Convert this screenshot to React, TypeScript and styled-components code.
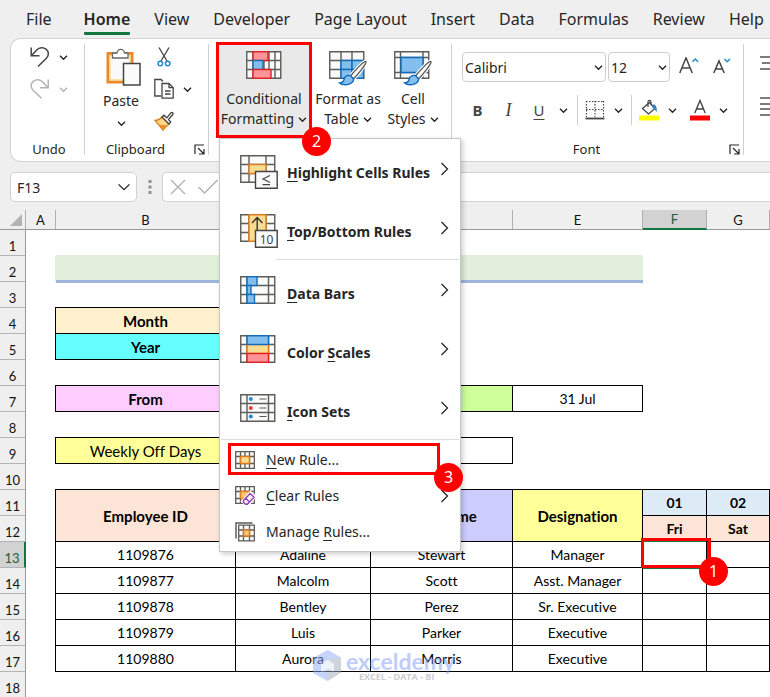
import React from 'react';
import styled, { createGlobalStyle, css } from 'styled-components';

const UI = '"Noto Sans", "Open Sans", sans-serif';
const SHEET = 'Lato, "Open Sans", sans-serif';
const INK = '#262626';
const RED = '#ff0000';
const GREEN = '#137641';

const GlobalStyle = createGlobalStyle`
  * { box-sizing: border-box; }
  body { margin: 0; background: #efefef; color: ${INK}; font-family: ${UI}; }
  button, input, select { font: inherit; color: inherit; }
`;

const Page = styled.div`
  display: flex;
  flex-direction: column;
  height: 100vh;
  overflow: hidden;
`;

/* ---------- tabs ---------- */
const Tabs = styled.nav`
  display: flex;
  gap: 24px;
  height: 38px;
  padding-left: 26px;
  flex: none;
`;
const Tab = styled.button<{ $active?: boolean }>`
  position: relative;
  height: 38px;
  padding: 0;
  border: 0;
  background: none;
  font-size: 16px;
  line-height: 38px;
  white-space: nowrap;
  font-weight: ${(p) => (p.$active ? 600 : 400)};
  margin-left: ${(p) => (p.$active ? '8px' : '0')};
  ${(p) =>
    p.$active &&
    css`
      &::after {
        content: '';
        position: absolute;
        left: 0;
        right: 0;
        bottom: 3px;
        height: 3px;
        border-radius: 1px;
        background: ${GREEN};
      }
    `}
`;

/* ---------- ribbon ---------- */
const Ribbon = styled.div`
  display: flex;
  flex: none;
  margin-left: 10px;
  background: #fff;
  border: 1px solid #d1d1d1;
  border-right: 0;
  border-radius: 10px 0 0 10px;
`;
const Divider = styled.div`
  width: 1px;
  flex: none;
  margin: 5px 0 6px;
  background: #d1d1d1;
`;
const Group = styled.section<{ $width: number }>`
  width: ${(p) => p.$width}px;
  flex: none;
  padding-top: 3px;
`;
const GroupBody = styled.div<{ $pad?: string }>`
  display: flex;
  height: 96px;
  padding: ${(p) => p.$pad || '0'};
`;
const GroupFooter = styled.div`
  display: flex;
  align-items: center;
  height: 23px;
  font-size: 13px;
  line-height: 23px;
`;
const GroupLabel = styled.span<{ $wide?: boolean }>`
  flex: 1;
  text-align: center;
  padding-left: ${(p) => (p.$wide ? '3px' : '0')};
`;
const Launcher = styled.button`
  width: 22px;
  height: 22px;
  padding: 0 0 0 8px;
  border: 0;
  background: none;
  display: flex;
  align-items: center;
`;
const Stack = styled.div<{ $gap: number; $pad?: string }>`
  display: flex;
  flex-direction: column;
  gap: ${(p) => p.$gap}px;
  padding: ${(p) => p.$pad || '0'};
`;
const IconButton = styled.button<{ $gap?: number; $muted?: boolean; $width?: number }>`
  display: flex;
  align-items: center;
  gap: ${(p) => p.$gap || 0}px;
  width: ${(p) => (p.$width ? `${p.$width}px` : 'auto')};
  height: 24px;
  padding: 0;
  border: 0;
  background: none;
  flex: none;
  color: ${(p) => (p.$muted ? '#b4b4b4' : INK)};
`;
const IconSlot = styled.span`
  display: flex;
  padding-left: 7px;
`;
const BigButton = styled.button<{ $width: number; $hot?: boolean }>`
  display: flex;
  flex-direction: column;
  align-items: center;
  width: ${(p) => p.$width}px;
  height: 96px;
  flex: none;
  padding: 9px 0 0;
  border: 0;
  background: ${(p) => (p.$hot ? '#e9e9e9' : 'none')};
  font-size: 14px;
  line-height: 20px;
  white-space: nowrap;
`;
const PasteButton = styled(BigButton)`
  padding-top: 6px;
`;
const BigIcon = styled.span<{ $shift?: boolean; $tall?: boolean }>`
  display: flex;
  height: ${(p) => (p.$tall ? 43 : 38)}px;
  padding-left: ${(p) => (p.$shift ? 5 : 0)}px;
`;
const WithChevron = styled.span`
  display: flex;
  align-items: center;
  gap: 4px;
`;
const MenuAnchor = styled.div`
  position: relative;
  flex: none;
`;

/* ---------- callouts ---------- */
const Frame = styled.span`
  position: absolute;
  inset: 0;
  border: 3px solid ${RED};
  pointer-events: none;
`;
const Badge = styled.span<{ $right: number; $bottom: number }>`
  position: absolute;
  right: ${(p) => p.$right}px;
  bottom: ${(p) => p.$bottom}px;
  z-index: 5;
  width: 29px;
  height: 29px;
  border-radius: 50%;
  background: ${RED};
  color: #fff;
  font: 400 16px/29px ${UI};
  text-align: center;
`;

/* ---------- font group ---------- */
const FontTools = styled.div`
  display: flex;
  flex-direction: column;
  gap: 13px;
  padding: 10px 0 0 10px;
`;
const ToolRow = styled.div`
  display: flex;
  align-items: center;
  height: 30px;
`;
const SelectBox = styled.label<{ $width: number }>`
  display: flex;
  align-items: center;
  position: relative;
  width: ${(p) => p.$width}px;
  height: 30px;
  margin-right: 2px;
  border: 1px solid #cdcdcd;
  border-radius: 4px;
  font-size: 14px;
  select {
    appearance: none;
    width: 100%;
    height: 28px;
    padding: 0 18px 0 2px;
    border: 0;
    background: none;
  }
  svg {
    position: absolute;
    right: 2px;
    pointer-events: none;
  }
`;
const ToolDivider = styled.span`
  width: 1px;
  height: 30px;
  background: #d1d1d1;
`;
const Letter = styled.span<{ $kind: 'b' | 'i' | 'u' }>`
  width: ${(p) => (p.$kind === 'u' ? 30 : 31)}px;
  text-align: center;
  font-size: 15px;
  line-height: 20px;
  color: #444;
  ${(p) => p.$kind === 'b' && 'font-weight: 700;'}
  ${(p) => p.$kind === 'i' && 'font-style: italic; font-family: "Liberation Serif", serif; font-size: 18px;'}
  ${(p) => p.$kind === 'u' && 'text-decoration: underline; text-underline-offset: 3px;'}
`;

/* ---------- menu ---------- */
const Menu = styled.div`
  position: absolute;
  top: 100%;
  left: 3px;
  z-index: 4;
  width: 242px;
  padding: 2px 1px 1px;
  background: #fff;
  border: 1px solid #c6c6c6;
  box-shadow: 2px 2px 5px rgba(0, 0, 0, 0.2);
`;
const MenuItem = styled.button<{ $small?: boolean }>`
  position: relative;
  display: flex;
  align-items: center;
  width: 100%;
  height: ${(p) => (p.$small ? 36 : 59)}px;
  padding: 0 10px 0 ${(p) => (p.$small ? 14 : 19)}px;
  border: 0;
  background: none;
  text-align: left;
  font-size: 14px;
  line-height: 20px;
  font-weight: ${(p) => (p.$small ? 400 : 700)};
  white-space: nowrap;
`;
const MenuIcon = styled.span<{ $small?: boolean }>`
  display: flex;
  width: ${(p) => (p.$small ? 31 : 47)}px;
  flex: none;
  ${(p) => !p.$small && 'align-self: flex-start; padding-top: 14px;'}
`;
const MenuText = styled.span<{ $small?: boolean }>`
  flex: 1;
  padding-top: ${(p) => (p.$small ? 0 : 5)}px;
  u { text-underline-offset: 3px; text-decoration-thickness: 1px; }
`;
const ArrowSlot = styled.span<{ $small?: boolean }>`
  display: flex;
  padding-bottom: ${(p) => (p.$small ? 0 : 4)}px;
`;
const MenuLine = styled.div<{ $inset?: boolean }>`
  height: 1px;
  margin: ${(p) => (p.$inset ? '0 0 2px 55px' : '0 0 2px')};
  background: #dcdcdc;
`;
const ItemFrame = styled.span`
  position: absolute;
  inset: 1px 19px 3px 7px;
  border: 3px solid ${RED};
`;

/* ---------- formula bar ---------- */
const FormulaBar = styled.div`
  display: flex;
  align-items: center;
  flex: none;
  padding: 10px 0 8px 10px;
`;
const NameBox = styled.div`
  display: flex;
  align-items: center;
  width: 127px;
  height: 30px;
  background: #fff;
  border: 1px solid #d1d1d1;
  border-radius: 5px;
  input {
    flex: 1;
    min-width: 0;
    padding: 0 0 0 6px;
    border: 0;
    background: none;
    font-size: 14px;
    outline: 0;
  }
  button {
    display: flex;
    padding: 0 5px 0 0;
    border: 0;
    background: none;
  }
`;
const Dots = styled.span`
  display: flex;
  justify-content: center;
  width: 25px;
`;
const FormulaBox = styled.div`
  display: flex;
  align-items: center;
  gap: 12px;
  flex: 1;
  height: 30px;
  padding-left: 7px;
  background: #fff;
  border: 1px solid #d1d1d1;
  border-right: 0;
  border-radius: 5px 0 0 5px;
`;
const BareButton = styled.button`
  display: flex;
  padding: 0;
  border: 0;
  background: none;
`;

/* ---------- sheet ---------- */
const SheetArea = styled.main`
  position: relative;
  flex: 1;
  min-height: 0;
  overflow: hidden;
  background: #fff;
`;
const Grid = styled.table`
  width: 100%;
  table-layout: fixed;
  border-collapse: separate;
  border-spacing: 0;
  font-family: ${SHEET};
  font-size: 14px;
  line-height: 20px;
  font-variant-ligatures: none;
  color: #000;
  th, td { padding: 0; overflow: visible; white-space: nowrap; }
`;
const Col = styled.col<{ $w?: number }>`
  width: ${(p) => (p.$w ? `${p.$w}px` : 'auto')};
`;
const ColHead = styled.th<{ $active?: boolean }>`
  height: 20px;
  font-size: 13px;
  line-height: 18px;
  font-weight: 400;
  background: ${(p) => (p.$active ? '#d2d2d2' : '#efefef')};
  color: ${(p) => (p.$active ? '#1d5c3d' : '#111')};
  border-right: 1px solid #b0b0b0;
  border-bottom: ${(p) => (p.$active ? `2px solid ${GREEN}` : '1px solid #999')};
`;
const Corner = styled(ColHead)`
  svg { display: block; margin-left: 10px; }
`;
const RowHead = styled.th<{ $active?: boolean }>`
  height: 26px;
  font-size: 13px;
  line-height: 18px;
  font-weight: 400;
  vertical-align: bottom;
  background: ${(p) => (p.$active ? '#d2d2d2' : '#efefef')};
  color: ${(p) => (p.$active ? '#1d5c3d' : '#111')};
  border-right: ${(p) => (p.$active ? `2px solid ${GREEN}` : '1px solid #999')};
  border-bottom: 1px solid #b4b4b4;
`;
const Cell = styled.td<{ $fill?: string; $boxed?: boolean; $bold?: boolean; $large?: boolean }>`
  position: relative;
  text-align: center;
  vertical-align: middle;
  background: ${(p) => p.$fill || 'transparent'};
  font-size: ${(p) => (p.$large ? 15 : 14)}px;
  font-weight: ${(p) => (p.$bold ? 700 : 400)};
  border-right: 1px solid transparent;
  border-bottom: 1px solid transparent;
  ${(p) =>
    p.$boxed &&
    css`
      border-color: #000;
      box-shadow: -1px 0 0 #000, 0 -1px 0 #000, -1px -1px 0 #000;
    `}
`;
const TitleCell = styled.td`
  background: #e2efda;
  border-bottom: 2px solid #9fb5de;
  box-shadow: -1px 0 0 #e2efda, 0 -1px 0 #e2efda, 0 1px 0 #9fb5de;
`;
const Selected = styled.span`
  position: absolute;
  inset: -2px -2px -2px -1px;
  border: 2px solid ${GREEN};
`;
const CellFrame = styled.span`
  position: absolute;
  inset: -4px -5px -1px -2px;
  z-index: 1;
  border: 3px solid ${RED};
`;
const Watermark = styled.div`
  position: absolute;
  left: 313px;
  top: 440px;
  display: flex;
  align-items: center;
  gap: 4px;
  color: #7f9cf5;
  opacity: 0.5;
  div { font: 700 23px/22px Lato, sans-serif; }
  small {
    display: block;
    padding-left: 13px;
    font: 700 9px/9px "Open Sans", sans-serif;
    color: #9a9aa4;
  }
`;

/* ---------- drawings ---------- */
const Chevron = ({ w = 9, color = INK }: { w?: number; color?: string }) => (
  <svg width={w} height={w} viewBox="0 0 9 9" fill="none" stroke={color} strokeWidth={w > 10 ? 0.85 : 1.4}>
    <path d="M1 2.8 4.5 6.2 8 2.8" />
  </svg>
);
const Arrow = () => (
  <svg width="9" height="14" viewBox="0 0 9 14" fill="none" stroke={INK} strokeWidth="1.3">
    <path d="M1.5 1 7.5 7l-6 6" />
  </svg>
);
const UndoIcon = () => (
  <svg width="20" height="22" viewBox="0 0 20 22" fill="none" stroke="#444" strokeWidth="1.5">
    <path d="M1.2 1.5v8.3h8.3M1.6 9.4 7 3.8C9.3 1.5 13.3 1 16 3.2c3 2.5 3.2 6 .4 9L8 20.5" />
  </svg>
);
const RedoIcon = () => (
  <svg width="20" height="22" viewBox="0 0 20 22" fill="none" stroke="currentColor" strokeWidth="1.5">
    <path d="M18.3 1.5v8.3H10M17.9 9.4 12.5 3.8C10.2 1.5 6.200 1 3.5 3.2c-3 2.5-3.200 6-.4 9l8.600 8.3" />
  </svg>
);
const PasteIcon = () => (
  <svg width="36" height="38" viewBox="0 0 36 38" fill="none">
    <path d="M2 5.500h24V34H2z" fill="#fafafa" stroke="#e8892b" strokeWidth="3" />
    <path d="M4 7.500h20V32H4z" stroke="#fbd98b" strokeWidth="1.500" />
    <path d="M6.500 10V5H11a3.700 3.700 0 0 1 7.400 0H22v5z" fill="#fff" stroke="#6a6a6a" strokeWidth="1.300" />
    <path d="M17.500 15.500h16.500v21.500H17.500z" fill="#fafafa" stroke="#444" strokeWidth="1.500" />
  </svg>
);
const CutIcon = () => (
  <svg width="20" height="22" viewBox="0 0 20 22" fill="none">
    <path d="M5 1.500 13 15M15 1.500 7 15" stroke="#444" strokeWidth="1.300" />
    <circle cx="6.300" cy="17.500" r="2.300" stroke="#2389cf" strokeWidth="1.500" />
    <circle cx="13.700" cy="17.500" r="2.300" stroke="#2389cf" strokeWidth="1.500" />
  </svg>
);
const CopyIcon = () => (
  <svg width="20" height="22" viewBox="0 0 20 22" fill="none" stroke="#444" strokeWidth="1.300">
    <path d="M7 18H.8V1.500H7l2 2" />
    <path d="M8 5.500h7l4.200 4.200v10.500H8z" fill="#fff" />
    <path d="M15 5.500v4.200h4.200M11 13h5.500M11 16h5.500" />
  </svg>
);
const BrushIcon = () => (
  <svg width="20" height="20" viewBox="0 0 20 20" fill="none">
    <path d="M1 9.500c3-.3 5.500-1.500 7-3.500l7 7c-2 2-4 3.500-6 6z" fill="#fbd98b" stroke="#e07b1a" strokeWidth="1.300" />
    <path d="M4 13.500 9 18l4-3.500z" fill="#f08a24" />
    <path d="m8 6 2-1.800 2.800 2.600L17 1.800c1.200-1 2.700.5 1.800 1.700L14.500 8.500l2.200 2.500-1.700 2z" fill="#fff" stroke="#444" strokeWidth="1.300" />
  </svg>
);
const LauncherIcon = () => (
  <svg width="11" height="11" viewBox="0 0 11 11" fill="none" stroke={INK} strokeWidth="1.200">
    <path d="M1 10V1h9M4 4l5.500 5.500M10 5v5H5" />
  </svg>
);

type Box = [number, number, number, number, string, string];
const BLUE: [string, string] = ['#83beec', '#0f6cbd'];
const ROSE: [string, string] = ['#ff9499', '#e02020'];
const AMBER: [string, string] = ['#f8dc92', '#e07b1a'];

const GridIcon = ({
  v,
  boxes = [],
  width = 38,
  height = 34,
  h = 28,
  children,
}: {
  v: number[];
  boxes?: Box[];
  width?: number;
  height?: number;
  h?: number;
  children?: React.ReactNode;
}) => (
  <svg width={width} height={height} viewBox={`0 0 ${width} ${height}`} fill="none">
    <path
      d={`M.75.75h34v${h - 1.5}h-34zM.75 9.500h34M.75 18.500h34${v.map((x) => `M${x} .75v${h - 1.5}`).join('')}`}
      fill="#fafafa"
      stroke="#5c5c58"
      strokeWidth="1.400"
    />
    {boxes.map(([x, y, w, bh, fill, stroke], i) => (
      <rect key={i} x={x} y={y} width={w} height={bh} fill={fill} stroke={stroke} strokeWidth="1.400" />
    ))}
    {children}
  </svg>
);
const BrushOverlay = () => (
  <g>
    <path d="M36 10.500c-3 1.500-11 10-14.500 14.500l3 2.800C28.500 24 36 14.500 37 11.500c.200-.9-.3-1.300-1-1z" fill="#fff" stroke="#fff" strokeWidth="3.500" />
    <path d="M36 10.500c-3 1.500-11 10-14.500 14.500l3 2.800C28.500 24 36 14.500 37 11.500c.200-.9-.3-1.300-1-1z" fill="#fff" stroke="#555" strokeWidth="1.300" />
    <path d="M21.500 24.500c-4-.5-6 1.500-6.500 4-.4 2-2 3.300-4.500 3.500 3 2.500 13 3 14.300-3.800z" fill="#83beec" stroke="#0f6cbd" strokeWidth="1.300" />
  </g>
);
const ConditionalIcon = () => (
  <GridIcon
    width={36}
    height={28}
    v={[7, 18, 23, 29]}
    boxes={[
      [7, 0.75, 15, 8.75, ...ROSE],
      [7, 9.5, 10, 9, ...BLUE],
      [7, 18.5, 18, 8.75, ...ROSE],
    ]}
  />
);
const TableIcon = () => (
  <GridIcon
    v={[12, 23]}
    height={36}
    boxes={[
      [12, 9.5, 11, 9, ...BLUE],
      [23, 9.5, 11.5, 9, ...BLUE],
      [12, 18.5, 11, 8.75, ...BLUE],
      [23, 18.5, 11.5, 8.75, ...BLUE],
    ]}
  >
    <BrushOverlay />
  </GridIcon>
);
const StylesIcon = () => (
  <svg width="38" height="36" viewBox="0 0 38 36" fill="none">
    <path d="M.75.75h34v26.500h-34zM.75 6.500h34M.75 21.500h34M6.500.75v26.500M29 .75v26.500" fill="#fafafa" stroke="#5c5c58" strokeWidth="1.400" />
    <path d="M7 6.500h22v15H7z" fill="#83beec" stroke="#0f6cbd" strokeWidth="1.400" />
    <BrushOverlay />
  </svg>
);
const HighlightIcon = () => (
  <GridIcon v={[9, 26]} boxes={[[9, 9.5, 17, 9, ...AMBER]]}>
    <path d="M15.500 16.500h21.700v16.700H15.500z" fill="#fafafa" stroke="#444" strokeWidth="1.400" />
    <path d="m30 20.500-7 3.500 7 3.500M22.500 29.700H30" stroke="#444" strokeWidth="1.200" />
  </GridIcon>
);
const TopBottomIcon = () => (
  <GridIcon v={[9, 26]} boxes={[[9, 0.75, 17, 26.5, ...AMBER]]}>
    <path d="M17.200 19V4M12 9l5.200-5.500L22.500 9" stroke="#333" strokeWidth="1.400" />
    <path d="M15.500 16.500h21.700v16.700H15.500z" fill="#fafafa" stroke="#444" strokeWidth="1.400" />
    <text x="26.500" y="29.500" textAnchor="middle" fontSize="12" fontWeight="400" fontFamily="Noto Sans, sans-serif" fill="#444">10</text>
  </GridIcon>
);
const DataBarsIcon = () => (
  <GridIcon
    height={28}
    v={[7, 28.5]}
    boxes={[
      [7, 0.75, 10, 8.75, ...BLUE],
      [7, 9.5, 4, 9, ...BLUE],
      [7, 18.5, 7.5, 8.75, ...BLUE],
    ]}
  />
);
const ScalesIcon = () => (
  <GridIcon
    height={28}
    v={[7, 28.5]}
    boxes={[
      [7, 9.5, 21.5, 9, ...AMBER],
      [7, 0.75, 21.5, 8.75, ...BLUE],
      [7, 18.5, 21.5, 8.75, ...ROSE],
    ]}
  />
);
const SetsIcon = () => (
  <GridIcon height={28} v={[7, 28.5]}>
    <path d="M19.500 5h7M19.500 14h7M19.500 22.500h7" stroke="#5c5c58" strokeWidth="1.200" />
    <circle cx="10.800" cy="5" r="2" fill="#2389cf" />
    <circle cx="10.800" cy="14" r="2" fill="#ee3a35" />
    <circle cx="10.800" cy="22.500" r="2" fill="#2389cf" />
  </GridIcon>
);
const SmallGrid = () => (
  <path d="M.7.7h18.600v16.600H.7zM.7 5.500h18.600M.7 12.500h18.600M5.500.7v16.600M14.500.7v16.600M10 .7v16.600" fill="#fafafa" stroke="#5c5c58" strokeWidth="1.300" />
);
const NewRuleIcon = () => (
  <svg width="20" height="18" viewBox="0 0 20 18" fill="none">
    <SmallGrid />
    <path d="M5.500 5.500h9v7h-9z" fill="#f8dc92" stroke="#e07b1a" strokeWidth="1.600" />
  </svg>
);
const ClearIcon = () => (
  <svg width="20" height="20" viewBox="0 0 20 20" fill="none">
    <SmallGrid />
    <path d="M5.500 5.500h9v7h-9z" fill="#f8c878" stroke="#e07b1a" strokeWidth="1.400" />
    <path d="M7 15.500 15.500 6l5 4.500-7.500 9z" fill="#fff" stroke="#fff" strokeWidth="2" />
    <path d="m8.500 14.500 6.700-7 3.800 3.700-6.700 7.100h-1.600l-2.200-2.100zM10.800 12.200l3.600 3.700" fill="#fff" stroke="#9b3fb5" strokeWidth="1.500" />
  </svg>
);
const ManageIcon = () => (
  <svg width="20" height="20" viewBox="0 0 20 20" fill="none">
    <path d="M1 16.500V1h16.500" stroke="#5c5c58" strokeWidth="1.500" />
    <path d="M3.700 3.200h15.600v15.600H3.700zM3.700 8h15.600M3.700 14h15.600M8.500 3.200v15.600M14.500 3.200v15.600" fill="#fafafa" stroke="#5c5c58" strokeWidth="1.300" />
    <path d="M8.500 8h6v6h-6z" fill="#f8c878" stroke="#e07b1a" strokeWidth="1.600" />
  </svg>
);
const GrowIcon = ({ down }: { down?: boolean }) => (
  <svg width="20" height="20" viewBox="0 0 20 20" fill="none">
    <path
      d={down ? 'M.8 16 6 4l5.200 12M2.700 12h6.600' : 'M.8 16 7 .8 13.200 16M3 11h8'}
      stroke="#444"
      strokeWidth="1.500"
    />
    <path d={down ? 'M11.500 2l2.700 2.700L17 2' : 'M13.500 4.700 16.200 2 19 4.700'} stroke="#2389cf" strokeWidth="1.500" />
  </svg>
);
const BordersIcon = () => (
  <svg width="20" height="20" viewBox="0 0 20 20" fill="none" stroke="#444">
    <path d="M1.500 1v16M10 1v16M18.500 1v16M1 1.500h18M1 9.500h18" strokeWidth="1.200" strokeDasharray="1.500 1.500" />
    <path d="M.5 18.500h19" strokeWidth="1.800" />
  </svg>
);
const FillIcon = () => (
  <svg width="20" height="22" viewBox="0 0 20 22" fill="none">
    <path d="m10.500 3.500 5.500 6-6.500 5.500-6-5.500z" fill="#fff" stroke="#444" strokeWidth="1.300" />
    <path d="M9 8V3c0-2.300 3-2.300 3 0v3" stroke="#444" strokeWidth="1.200" />
    <path d="M14 5.500c3 0 4 2.500 3.800 7.500-1.300-1.500-2-3-4.300-4" fill="#2d7fc4" />
    <path d="M0 16.500h20v5H0z" fill="#ff0" />
  </svg>
);
const FontColorIcon = () => (
  <svg width="20" height="22" viewBox="0 0 20 22" fill="none">
    <path d="M4.800 14 10 1.500 15.200 14M6.500 10h7" stroke="#444" strokeWidth="1.400" />
    <path d="M0 16.500h20v5H0z" fill={RED} />
  </svg>
);
const AlignIcon = ({ rows }: { rows: [number, number][] }) => (
  <svg width="18" height="20" viewBox="0 0 18 20" stroke="#444" strokeWidth="1.400">
    {rows.map(([x, y]) => (
      <path key={y} d={`M${x} ${y}H${18 - x}`} />
    ))}
  </svg>
);

/* ---------- data ---------- */
const tabs = ['File', 'Home', 'View', 'Developer', 'Page Layout', 'Insert', 'Data', 'Formulas', 'Review', 'Help'];

type Entry = { pre?: string; k: string; post: string; icon: React.ReactNode; sub?: boolean; marked?: boolean };
const rules: Entry[] = [
  { k: 'H', post: 'ighlight Cells Rules', icon: <HighlightIcon /> },
  { k: 'T', post: 'op/Bottom Rules', icon: <TopBottomIcon /> },
  { k: 'D', post: 'ata Bars', icon: <DataBarsIcon /> },
  { pre: 'Color ', k: 'S', post: 'cales', icon: <ScalesIcon /> },
  { k: 'I', post: 'con Sets', icon: <SetsIcon /> },
];
const actions: Entry[] = [
  { k: 'N', post: 'ew Rule...', icon: <NewRuleIcon />, marked: true },
  { k: 'C', post: 'lear Rules', icon: <ClearIcon />, sub: true },
  { pre: 'Manage ', k: 'R', post: 'ules...', icon: <ManageIcon /> },
];

type CellData = {
  t?: string;
  fill?: string;
  box?: boolean;
  bold?: boolean;
  large?: boolean;
  span?: number;
  rows?: number;
  selected?: boolean;
};
const E: CellData = {};
const B: CellData = { box: true };
const label = (t: string, fill: string, more: CellData = {}): CellData => ({
  t,
  fill,
  box: true,
  bold: true,
  large: true,
  ...more,
});
const day = (t: string, fill: string): CellData => ({ t, fill, box: true, bold: true });
const person = (id: string, first: string, last: string, role: string, selected = false): CellData[] => [
  E,
  { t: id, box: true },
  { t: first, box: true },
  { t: last, box: true },
  { t: role, box: true },
  { box: true, selected },
  B,
];
const blank: CellData[] = [E, E, E, E, E, E, E];
const sheet: (CellData[] | 'title')[] = [
  blank,
  'title',
  blank,
  [E, label('Month', '#fff0cd'), B, E, E, E, E],
  [E, label('Year', '#66ffff'), B, E, E, E, E],
  blank,
  [E, label('From', '#ffccff'), B, { fill: '#ccff99', box: true }, { t: '31 Jul', box: true }, E, E],
  blank,
  [E, label('Weekly Off Days', '#ffff99', { bold: false }), { box: true, span: 2 }, E, E, E],
  blank,
  [
    E,
    label('Employee ID', '#fce4d6', { rows: 2 }),
    { box: true, rows: 2 },
    label('Last Name', '#ccccff', { rows: 2 }),
    label('Designation', '#ffff99', { rows: 2 }),
    day('01', '#ddebf7'),
    day('02', '#ddebf7'),
  ],
  [E, day('Fri', '#fce4d6'), day('Sat', '#fce4d6')],
  person('1109876', 'Adaline', 'Stewart', 'Manager', true),
  person('1109877', 'Malcolm', 'Scott', 'Asst. Manager'),
  person('1109878', 'Bentley', 'Perez', 'Sr. Executive'),
  person('1109879', 'Luis', 'Parker', 'Executive'),
  person('1109880', 'Aurora', 'Morris', 'Executive'),
  blank,
];

const RuleMenu = () => (
  <Menu role="menu">
    {rules.map((r, i) => (
      <React.Fragment key={r.post}>
        {i === 2 && <MenuLine $inset />}
        <MenuItem role="menuitem">
          <MenuIcon>{r.icon}</MenuIcon>
          <MenuText>
            {r.pre}
            <u>{r.k}</u>
            {r.post}
          </MenuText>
          <ArrowSlot><Arrow /></ArrowSlot>
        </MenuItem>
      </React.Fragment>
    ))}
    <MenuLine />
    {actions.map((a) => (
      <MenuItem role="menuitem" $small key={a.post}>
        <MenuIcon $small>{a.icon}</MenuIcon>
        <MenuText $small>
          {a.pre}
          <u>{a.k}</u>
          {a.post}
        </MenuText>
        {a.sub && <ArrowSlot $small><Arrow /></ArrowSlot>}
        {a.marked && (
          <ItemFrame>
            <Badge $right={-26} $bottom={-20}>3</Badge>
          </ItemFrame>
        )}
      </MenuItem>
    ))}
  </Menu>
);

export default function App() {
  return (
    <Page>
      <GlobalStyle />
      <Tabs>
        {tabs.map((t) => (
          <Tab key={t} $active={t === 'Home'}>{t}</Tab>
        ))}
      </Tabs>

      <Ribbon>
        <Group $width={73}>
          <GroupBody>
            <Stack $gap={8} $pad="3px 0 0 19px">
              <IconButton aria-label="Undo" $gap={9}><UndoIcon /><Chevron /></IconButton>
              <IconButton aria-label="Redo" $gap={9} $muted><RedoIcon /><Chevron color="#b4b4b4" /></IconButton>
            </Stack>
          </GroupBody>
          <GroupFooter><GroupLabel $wide>Undo</GroupLabel></GroupFooter>
        </Group>
        <Divider />
        <Group $width={123}>
          <GroupBody $pad="0 0 0 12px">
            <PasteButton $width={48}>
              <BigIcon $shift $tall><PasteIcon /></BigIcon>
              <span>Paste</span>
              <IconButton as="span"><Chevron /></IconButton>
            </PasteButton>
            <Stack $gap={8} $pad="3px 0 0 9px">
              <IconButton aria-label="Cut"><CutIcon /></IconButton>
              <IconButton aria-label="Copy" $gap={9}><CopyIcon /><Chevron /></IconButton>
              <IconButton aria-label="Format Painter"><BrushIcon /></IconButton>
            </Stack>
          </GroupBody>
          <GroupFooter>
            <GroupLabel>Clipboard</GroupLabel>
            <Launcher aria-label="Clipboard settings"><LauncherIcon /></Launcher>
          </GroupFooter>
        </Group>
        <Divider />
        <Group $width={242}>
          <GroupBody $pad="0 0 0 7px">
            <MenuAnchor>
              <BigButton $width={96} $hot aria-haspopup="menu" aria-expanded>
                <BigIcon><ConditionalIcon /></BigIcon>
                <span>Conditional</span>
                <WithChevron>Formatting <Chevron /></WithChevron>
              </BigButton>
              <Frame />
              <RuleMenu />
              <Badge $right={-19} $bottom={-18}>2</Badge>
            </MenuAnchor>
            <BigButton $width={72}>
              <BigIcon><TableIcon /></BigIcon>
              <span>Format as</span>
              <WithChevron>Table <Chevron /></WithChevron>
            </BigButton>
            <BigButton $width={58}>
              <BigIcon><StylesIcon /></BigIcon>
              <span>Cell</span>
              <WithChevron>Styles <Chevron /></WithChevron>
            </BigButton>
          </GroupBody>
        </Group>
        <Divider />
        <Group $width={291}>
          <GroupBody>
            <FontTools>
              <ToolRow>
                <SelectBox $width={144}>
                  <select aria-label="Font" defaultValue="Calibri"><option>Calibri</option></select>
                  <Chevron />
                </SelectBox>
                <SelectBox $width={62}>
                  <select aria-label="Font size" defaultValue="12"><option>12</option></select>
                  <Chevron />
                </SelectBox>
                <IconButton aria-label="Increase font size" $width={34}><IconSlot><GrowIcon /></IconSlot></IconButton>
                <IconButton aria-label="Decrease font size" $width={34}><IconSlot><GrowIcon down /></IconSlot></IconButton>
              </ToolRow>
              <ToolRow>
                <IconButton aria-label="Bold"><Letter $kind="b">B</Letter></IconButton>
                <IconButton aria-label="Italic"><Letter $kind="i">I</Letter></IconButton>
                <IconButton aria-label="Underline" $width={53} $gap={5}><Letter $kind="u">U</Letter><Chevron /></IconButton>
                <ToolDivider />
                <IconButton aria-label="Borders" $width={53} $gap={9}><IconSlot><BordersIcon /></IconSlot><Chevron /></IconButton>
                <ToolDivider />
                <IconButton aria-label="Fill color" $width={58} $gap={9}><IconSlot><FillIcon /></IconSlot><Chevron /></IconButton>
                <IconButton aria-label="Font color" $gap={9}><FontColorIcon /><Chevron /></IconButton>
              </ToolRow>
            </FontTools>
          </GroupBody>
          <GroupFooter>
            <GroupLabel>Font</GroupLabel>
            <Launcher aria-label="Font settings"><LauncherIcon /></Launcher>
          </GroupFooter>
        </Group>
        <Divider />
        <Stack $gap={19} $pad="12px 0 0 16px">
          <IconButton aria-label="Align top"><AlignIcon rows={[[0, 4], [2, 10], [0, 16]]} /></IconButton>
          <IconButton aria-label="Align text"><AlignIcon rows={[[0, 2], [0, 8], [0, 13], [0, 19]]} /></IconButton>
        </Stack>
      </Ribbon>

      <FormulaBar>
        <NameBox>
          <input aria-label="Name box" defaultValue="F13" />
          <button aria-label="Open name list"><Chevron w={14} /></button>
        </NameBox>
        <Dots>
          <svg width="4" height="14" viewBox="0 0 4 14" fill="#919191">
            <path d="M.5 0h3v3h-3zM.5 5.500h3v3h-3zM.5 11h3v3h-3z" />
          </svg>
        </Dots>
        <FormulaBox>
          <BareButton aria-label="Cancel">
            <svg width="16" height="16" viewBox="0 0 16 16" fill="none" stroke="#b0b0b0" strokeWidth="1.400"><path d="m1 1 14 14M15 1 1 15" /></svg>
          </BareButton>
          <BareButton aria-label="Enter">
            <svg width="20" height="16" viewBox="0 0 20 16" fill="none" stroke="#b0b0b0" strokeWidth="1.400"><path d="m.5 8 6 6L19.500 1" /></svg>
          </BareButton>
        </FormulaBox>
      </FormulaBar>

      <SheetArea>
        <Grid>
          <colgroup>
            <Col $w={26} /><Col $w={30} /><Col $w={180} /><Col $w={135} /><Col $w={142} /><Col $w={130} /><Col $w={64} /><Col />
          </colgroup>
          <thead>
            <tr>
              <Corner aria-label="Select all">
                <svg width="12" height="12" viewBox="0 0 12 12" fill="#b2b2b2"><path d="M12 0v12H0z" /></svg>
              </Corner>
              {['A', 'B', '', '', 'E', 'F', 'G'].map((c, i) => (
                <ColHead key={i} $active={c === 'F'}>{c}</ColHead>
              ))}
            </tr>
          </thead>
          <tbody>
            {sheet.map((row, r) => (
              <tr key={r}>
                <RowHead $active={r === 12}>{r + 1}</RowHead>
                {row === 'title' ? (
                  <>
                    <Cell />
                    <TitleCell colSpan={4} />
                    <Cell />
                    <Cell />
                  </>
                ) : (
                  row.map((c, i) => (
                    <Cell key={i} $fill={c.fill} $boxed={c.box} $bold={c.bold} $large={c.large} colSpan={c.span} rowSpan={c.rows}>
                      {c.t}
                      {c.selected && (
                        <>
                          <Selected />
                          <CellFrame>
                            <Badge $right={-20} $bottom={-21}>1</Badge>
                          </CellFrame>
                        </>
                      )}
                    </Cell>
                  ))
                )}
              </tr>
            ))}
          </tbody>
        </Grid>
        <Watermark>
          <svg width="29" height="31" viewBox="0 0 29 31">
            <path d="M14.500 0 28 7.500v15L14.500 31 0 23V8z" fill="#8fa9f7" />
            <path d="M14.500 10 28 7.500v15L14.500 31z" fill="#a0a8b8" />
            <path d="m8 13 7-3 6 4v8l-6-3-7 4z" fill="#dfe6fb" />
          </svg>
          <div>
            exceldemy
            <small>EXCEL - DATA - BI</small>
          </div>
        </Watermark>
      </SheetArea>
    </Page>
  );
}
